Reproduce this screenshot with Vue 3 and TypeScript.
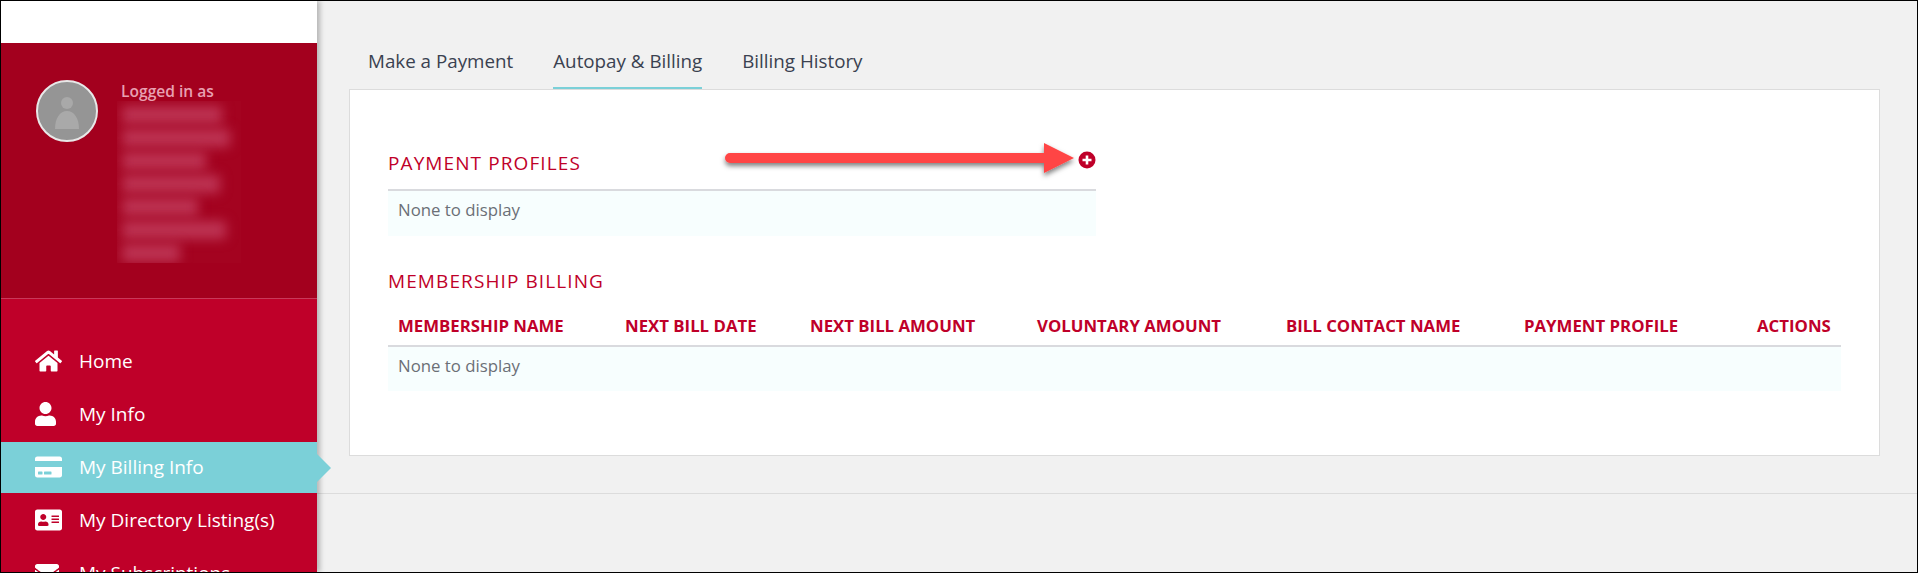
<script setup lang="ts">
// Billing page: sidebar nav, tabs, and the two empty billing tables.
interface NavItem {
  label: string;
  viewBox: string;
  width: number;
  path: string;
  active?: boolean;
}

const NAV: NavItem[] = [
  {
    label: 'Home',
    viewBox: '0 0 576 512',
    width: 27,
    path: 'M280.37 148.26L96 300.11V464a16 16 0 0 0 16 16l112.06-.29a16 16 0 0 0 15.92-16V368a16 16 0 0 1 16-16h64a16 16 0 0 1 16 16v95.64a16 16 0 0 0 16 16.05L464 480a16 16 0 0 0 16-16V300L295.67 148.26a12.19 12.19 0 0 0-15.3 0zM571.6 251.47L488 182.56V44.05a12 12 0 0 0-12-12h-56a12 12 0 0 0-12 12v72.61L318.47 43a48 48 0 0 0-61 0L4.34 251.47a12 12 0 0 0-1.6 16.9l25.5 31A12 12 0 0 0 45.15 301l235.22-193.74a12.19 12.19 0 0 1 15.3 0L530.9 301a12 12 0 0 0 16.9-1.6l25.5-31a12 12 0 0 0-1.7-16.93z',
  },
  {
    label: 'My Info',
    viewBox: '0 0 448 512',
    width: 21,
    path: 'M224 256c70.7 0 128-57.3 128-128S294.7 0 224 0 96 57.3 96 128s57.3 128 128 128zm89.6 32h-16.7c-22.2 10.2-46.9 16-72.9 16s-50.6-5.8-72.9-16h-16.7C60.2 288 0 348.2 0 422.4V464c0 26.5 21.5 48 48 48h352c26.5 0 48-21.5 48-48v-41.6c0-74.2-60.2-134.4-134.4-134.4z',
  },
  {
    label: 'My Billing Info',
    viewBox: '0 0 576 512',
    width: 27,
    active: true,
    path: 'M0 432c0 26.5 21.5 48 48 48h480c26.5 0 48-21.5 48-48V256H0v176zm192-68c0-6.6 5.4-12 12-12h136c6.6 0 12 5.4 12 12v40c0 6.6-5.4 12-12 12H204c-6.6 0-12-5.4-12-12v-40zm-128 0c0-6.6 5.4-12 12-12h72c6.6 0 12 5.4 12 12v40c0 6.6-5.4 12-12 12H76c-6.6 0-12-5.4-12-12v-40zM576 80v48H0V80c0-26.5 21.5-48 48-48h480c26.5 0 48 21.5 48 48z',
  },
  {
    label: 'My Directory Listing(s)',
    viewBox: '0 0 576 512',
    width: 27,
    path: 'M528 32H48C21.5 32 0 53.5 0 80v352c0 26.5 21.5 48 48 48h480c26.5 0 48-21.5 48-48V80c0-26.5-21.5-48-48-48zm-352 96c35.3 0 64 28.7 64 64s-28.7 64-64 64-64-28.7-64-64 28.7-64 64-64zm112 236.8c0 10.6-10 19.2-22.4 19.2H86.4C74 384 64 375.4 64 364.8v-19.2c0-31.8 30.1-57.6 67.2-57.6h5c12.3 5.1 25.7 8 39.8 8s27.6-2.9 39.8-8h5c37.1 0 67.2 25.8 67.2 57.6v19.2zM512 312c0 4.4-3.6 8-8 8H360c-4.4 0-8-3.6-8-8v-16c0-4.4 3.6-8 8-8h144c4.4 0 8 3.6 8 8v16zm0-64c0 4.4-3.6 8-8 8H360c-4.4 0-8-3.6-8-8v-16c0-4.4 3.6-8 8-8h144c4.4 0 8 3.6 8 8v16zm0-64c0 4.4-3.6 8-8 8H360c-4.4 0-8-3.6-8-8v-16c0-4.4 3.6-8 8-8h144c4.4 0 8 3.6 8 8v16z',
  },
  {
    label: 'My Subscriptions',
    viewBox: '0 0 512 512',
    width: 24,
    path: 'M502.3 190.8c3.9-3.1 9.7-.2 9.7 4.7V400c0 26.5-21.5 48-48 48H48c-26.5 0-48-21.5-48-48V195.6c0-5 5.7-7.8 9.7-4.7 22.4 17.4 52.1 39.5 154.1 113.6 21.1 15.4 56.7 47.8 92.2 47.6 35.7.3 72-32.8 92.3-47.6 102-74.1 131.6-96.3 154-113.7zM256 320c23.2.4 56.6-29.2 73.4-41.4 132.7-96.3 142.8-104.7 173.4-128.7 5.8-4.5 9.2-11.5 9.2-18.9v-19c0-26.5-21.5-48-48-48H48C21.5 64 0 85.5 0 112v19c0 7.4 3.4 14.3 9.2 18.9 30.6 23.9 40.7 32.4 173.4 128.7 16.8 12.2 50.2 41.8 73.4 41.4z',
  },
];

const TABS = ['Make a Payment', 'Autopay & Billing', 'Billing History'];
const ACTIVE_TAB = 'Autopay & Billing';

// Column widths measured from the header text starts
const COLUMNS = [
  { label: 'Membership Name', width: 227 },
  { label: 'Next Bill Date', width: 185 },
  { label: 'Next Bill Amount', width: 227 },
  { label: 'Voluntary Amount', width: 249 },
  { label: 'Bill Contact Name', width: 238 },
  { label: 'Payment Profile', width: 233 },
  { label: 'Actions', width: 94 },
];

// Redacted account details: widths of the blurred lines
const BLUR_LINES = [100, 108, 84, 98, 76, 104, 58];
</script>

<template>
  <div class="page">
    <aside class="sidebar">
      <div class="logo-bar"></div>
      <div class="profile">
        <div class="avatar">
          <svg viewBox="0 0 58 58" width="58" height="58">
            <circle cx="29" cy="21" r="6" fill="#a9a9a9" />
            <path d="M17 47 C17 36 22 29 29 29 C36 29 41 36 41 47 Z" fill="#a9a9a9" />
          </svg>
        </div>
        <div class="who">
          <div class="who-label">Logged in as</div>
          <div class="who-blur">
            <div
              v-for="(w, i) in BLUR_LINES"
              :key="i"
              class="blur-line"
              :style="{ width: w + 'px' }"
            ></div>
          </div>
        </div>
      </div>
      <nav class="nav">
        <a
          v-for="item in NAV"
          :key="item.label"
          :class="['nav-item', item.active ? 'active' : '']"
        >
          <span class="nav-icon">
            <svg :viewBox="item.viewBox" :width="item.width" height="24" fill="#fff">
              <path :d="item.path" />
            </svg>
          </span>
          {{ item.label }}
        </a>
      </nav>
    </aside>

    <main class="main">
      <div class="content">
        <div class="tabs">
          <span
            v-for="tab in TABS"
            :key="tab"
            :class="['tab', tab === ACTIVE_TAB ? 'active' : '']"
          >{{ tab }}</span>
        </div>

        <section class="card">
          <div class="profiles">
            <div class="title-row">
              <h2 class="title">Payment Profiles</h2>
              <svg class="add" viewBox="0 0 18 18" width="18" height="18">
                <circle cx="9" cy="9" r="8.5" fill="#bf0029" />
                <path d="M9 4.5v9M4.5 9h9" stroke="#fff" stroke-width="2.6" />
              </svg>
            </div>
            <div class="empty">None to display</div>
          </div>

          <h2 class="title billing-title">Membership Billing</h2>
          <table class="table">
            <thead>
              <tr>
                <th v-for="col in COLUMNS" :key="col.label" :style="{ width: col.width + 'px' }">{{ col.label }}</th>
              </tr>
            </thead>
            <tbody>
              <tr>
                <td class="empty" :colspan="COLUMNS.length">None to display</td>
              </tr>
            </tbody>
          </table>
        </section>
      </div>
    </main>

    <!-- Annotation arrow drawn over the screenshot -->
    <svg class="callout" viewBox="0 0 370 50" width="370" height="50">
      <defs>
        <filter id="arrow-shadow" x="-5%" y="-30%" width="110%" height="170%">
          <feDropShadow dx="0" dy="3" stdDeviation="2.5" flood-color="#000" flood-opacity="0.5" />
        </filter>
      </defs>
      <path
        d="M15 13 H329 V3 L359 18 L329 33 V23 H15 A5 5 0 0 1 15 13 Z"
        fill="#ff4545"
        filter="url(#arrow-shadow)"
      />
    </svg>
  </div>
</template>

<style>
html, body { margin: 0; padding: 0; background: #f1f1f1; }
</style>

<style scoped>
.page {
  position: relative;
  box-sizing: border-box;
  width: 1918px;
  height: 573px;
  display: flex;
  overflow: hidden;
  border: 1px solid #000;
  background: #f1f1f1;
  font-family: 'Open Sans', 'Noto Sans', sans-serif;
}

/* ── Sidebar ── */
.sidebar {
  position: relative;
  z-index: 1;
  flex: 0 0 316px;
  background: #bf0029;
  box-shadow: 3px 0 5px rgba(0, 0, 0, 0.25);
}
.logo-bar { height: 42px; background: #fff; }
.profile {
  box-sizing: border-box;
  height: 256px;
  display: flex;
  gap: 23px;
  padding: 37px 0 0 35px;
  background: #a3001e;
  border-bottom: 1px solid #c8395a;
}
.avatar {
  box-sizing: content-box;
  width: 58px;
  height: 58px;
  border: 2px solid #e8e8e8;
  border-radius: 50%;
  background: #959595;
  overflow: hidden;
}
.avatar svg { display: block; }
.who { margin-top: 1px; }
.who-label {
  font-size: 15.6px;
  font-weight: 600;
  line-height: 20px;
  color: #e8a0b2;
}
.who-blur {
  width: 124px;
  height: 162px;
  margin-left: -4px;
  overflow: hidden;
  display: flex;
  flex-direction: column;
  gap: 5px;
  padding-top: 5px;
  box-sizing: border-box;
  background: rgba(255, 255, 255, 0.012);
}
.blur-line {
  flex: none;
  height: 18px;
  margin-left: 5px;
  background: #bd3353;
  filter: blur(6px);
}

.nav { padding-top: 37px; display: flex; flex-direction: column; gap: 2px; }
.nav-item {
  position: relative;
  display: flex;
  align-items: center;
  height: 51px;
  flex: none;
  padding: 0 0 2px 34px;
  box-sizing: border-box;
  font-size: 19px;
  color: #fff;
}
.nav-item.active { background: #7bd0d8; }
.nav-item.active::after {
  content: '';
  position: absolute;
  left: 100%;
  top: 50%;
  margin-top: -14px;
  border-left: 14px solid #7bd0d8;
  border-top: 14px solid transparent;
  border-bottom: 14px solid transparent;
}
.nav-icon { flex: 0 0 45px; display: flex; margin-right: -1px; }

/* ── Main ── */
.main { flex: 1; min-width: 0; }
.content {
  padding: 48px 37px 37px 32px;
  border-bottom: 1px solid #dcdcdc;
}
.tabs { display: flex; gap: 40px; padding-left: 19px; }
.tab {
  box-sizing: border-box;
  height: 40px;
  line-height: 24px;
  font-size: 18.8px;
  color: #3a4150;
}
.tab.active { border-bottom: 2px solid #7bd0d8; }

.card {
  background: #fff;
  border: 1px solid #dcdcdc;
  padding: 62px 38px 64px;
}
.profiles { width: 708px; }
.title-row {
  display: flex;
  justify-content: space-between;
  align-items: center;
  padding-bottom: 15px;
  border-bottom: 2px solid #d9dade;
}
.title {
  margin: 0;
  font-size: 19px;
  font-weight: 400;
  line-height: 22px;
  letter-spacing: 1.1px;
  text-transform: uppercase;
  color: #bf0029;
}
.add { margin: -6px 0 0 0; }
.billing-title { margin-top: 34px; }

.empty {
  box-sizing: border-box;
  height: 45px;
  padding: 0 10px;
  line-height: 38px;
  font-size: 16.8px;
  color: #6b6f76;
  background: #f7fefe;
}
.table {
  width: 100%;
  table-layout: fixed;
  border-collapse: collapse;
}
.table th {
  padding: 24px 0 9px 10px;
  font-size: 16.8px;
  font-weight: 700;
  line-height: 20px;
  text-align: left;
  text-transform: uppercase;
  white-space: nowrap;
  color: #bf0029;
  border-bottom: 2px solid #d9dade;
  box-sizing: border-box;
}
.table td.empty { padding: 0 10px 5px; line-height: 1; }

.callout {
  position: absolute;
  left: 714px;
  top: 139px;
  z-index: 2;
}
</style>
